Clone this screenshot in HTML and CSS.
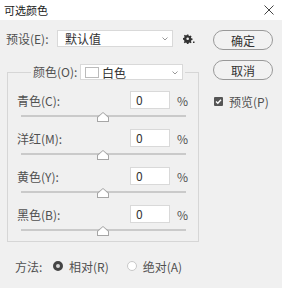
FILE: index.html
```html
<!DOCTYPE html>
<html lang="zh">
<head>
<meta charset="utf-8">
<link rel="stylesheet" href="styles.css">
</head>
<body>
<div class="window">
  <div class="titlebar">
    <span class="title">可选颜色</span>
    <svg class="close" width="10" height="10" viewBox="0 0 10 10"><path d="M0.5 0.5L9.5 9.5M9.5 0.5L0.5 9.5" stroke="#444" stroke-width="1" fill="none"/></svg>
  </div>
  <div class="main">
    <div class="left">
      <div class="preset">
        <span class="preset-label">预设(E):</span>
        <div class="select preset-select">
          <span>默认值</span>
          <svg class="chev" width="6" height="4" viewBox="0 0 6 4"><path d="M0.5 0.5L3 3L5.5 0.5" stroke="#999" fill="none"/></svg>
        </div>
        <svg class="gear" width="12" height="10" viewBox="0 0 12 10">
          <path d="M4 0.5h1.4l0.3 1.2 0.9 0.4 1-0.7 1 1-0.7 1 0.4 0.9 1.2 0.3v1.4l-1.2 0.3-0.4 0.9 0.7 1-1 1-1-0.7-0.9 0.4-0.3 1.2H4l-0.3-1.2-0.9-0.4-1 0.7-1-1 0.7-1-0.4-0.9L0 5.4V4l1.2-0.3 0.4-0.9-0.7-1 1-1 1 0.7 0.9-0.4z" fill="#333"/>
          <circle cx="4.7" cy="4.7" r="1.3" fill="#f0f0f0"/>
          <rect x="10" y="7.5" width="1.5" height="1.5" fill="#333"/>
        </svg>
      </div>
      <fieldset class="group">
        <legend class="legend">
          <span class="legend-label">颜色(O):</span>
          <div class="select color-select">
            <span class="swatch"></span>
            <span>白色</span>
            <svg class="chev" width="6" height="4" viewBox="0 0 6 4"><path d="M0.5 0.5L3 3L5.5 0.5" stroke="#999" fill="none"/></svg>
          </div>
        </legend>
        <div class="slider-block">
          <div class="row"><span class="label">青色(C):</span><div class="input">0</div><span class="pct">%</span></div>
          <div class="track"><span class="thumb"></span></div>
        </div>
        <div class="slider-block">
          <div class="row"><span class="label">洋红(M):</span><div class="input">0</div><span class="pct">%</span></div>
          <div class="track"><span class="thumb"></span></div>
        </div>
        <div class="slider-block">
          <div class="row"><span class="label">黄色(Y):</span><div class="input">0</div><span class="pct">%</span></div>
          <div class="track"><span class="thumb"></span></div>
        </div>
        <div class="slider-block">
          <div class="row"><span class="label">黑色(B):</span><div class="input">0</div><span class="pct">%</span></div>
          <div class="track"><span class="thumb"></span></div>
        </div>
      </fieldset>
      <div class="method">
        <span class="method-label">方法:</span>
        <span class="radio checked"></span>
        <span class="radio-text">相对(R)</span>
        <span class="radio"></span>
        <span class="radio-text">绝对(A)</span>
      </div>
    </div>
    <div class="right">
      <div class="btn">确定</div>
      <div class="btn">取消</div>
      <div class="preview">
        <span class="checkbox"><svg width="9" height="9" viewBox="0 0 9 9"><path d="M2 4.6L3.8 6.3L7 2.8" stroke="#fff" stroke-width="1.4" fill="none"/></svg></span>
        <span>预览(P)</span>
      </div>
    </div>
  </div>
</div>
</body>
</html>
```
FILE: styles.css
```css
* { box-sizing: border-box; }
html, body { margin: 0; padding: 0; }
body {
  width: 282px;
  height: 288px;
  background: #f0f0f0;
  font-family: "Noto Sans CJK SC", "Noto Sans", sans-serif;
  font-size: 12px;
  color: #505050;
  overflow: hidden;
}
.window { width: 282px; height: 288px; }
.titlebar {
  height: 20px;
  background: #fff;
  display: flex;
  align-items: center;
  justify-content: space-between;
  padding: 0 8px 0 4px;
}
.title { font-size: 11px; color: #1a1a1a; line-height: 20px; }
.close { display: block; }
.main { display: flex; }
.left { width: 200px; }
.preset {
  margin-top: 10px;
  height: 17px;
  display: flex;
  align-items: center;
  padding-left: 6px;
}
.preset-label { width: 51px; line-height: 17px; }
.select {
  background: #fff;
  border: 1px solid #d9d9d9;
  display: flex;
  align-items: center;
  position: relative;
  color: #333;
}
.preset-select { width: 116px; height: 17px; padding-left: 7px; }
.chev { position: absolute; right: 4px; top: 6px; }
.gear { margin-left: 10px; display: block; }
.group {
  margin: 17px 0 0 7px;
  width: 192px;
  padding: 11px 0 10px 0;
  border: 1px solid #d6d6d6;
  min-width: 0;
}
.legend {
  margin-left: 23px;
  padding: 0 2px;
  display: flex;
  align-items: center;
  height: 16px;
}
.legend-label { width: 47px; line-height: 16px; }
.color-select { width: 103px; height: 16px; padding-left: 4px; }
.swatch {
  width: 14px;
  height: 11px;
  border: 1px solid #bbb;
  background: #fff;
  margin-right: 3px;
}
.slider-block { margin-bottom: 12px; }
.slider-block:last-child { margin-bottom: 0; }
.row {
  display: flex;
  align-items: center;
  height: 18px;
  padding-left: 9px;
}
.label { width: 113px; }
.input {
  width: 40px;
  height: 18px;
  background: #fff;
  border: 1px solid #d9d9d9;
  padding-left: 5px;
  line-height: 16px;
  color: #333;
}
.pct { margin-left: 7px; }
.track {
  position: relative;
  margin: 6px 0 0 13px;
  width: 165px;
  height: 2px;
  background: #cacaca;
}
.thumb {
  position: absolute;
  left: 76px;
  top: -3px;
  width: 12px;
  height: 10px;
  background: #a6a6a6;
  clip-path: polygon(50% 0, 100% 50%, 100% 100%, 0 100%, 0 50%);
}
.thumb::after {
  content: "";
  position: absolute;
  left: 1px;
  top: 1px;
  width: 10px;
  height: 8px;
  background: #fff;
  clip-path: polygon(50% 0, 100% 55%, 100% 100%, 0 100%, 0 55%);
}
.method {
  margin-top: 16px;
  height: 16px;
  display: flex;
  align-items: center;
  padding-left: 15px;
}
.method-label { width: 38px; }
.radio {
  width: 10px;
  height: 10px;
  border-radius: 50%;
  background: #fff;
  border: 1px solid #c8c8c8;
  margin-right: 6px;
  margin-left: 18px;
}
.radio.checked {
  margin-left: 0;
  background: #d8d8d8;
  border: 3px solid #444;
}
.right { margin-left: 13px; }
.btn {
  width: 60px;
  height: 20px;
  border: 1px solid #999;
  border-radius: 10px;
  background: #f2f2f2;
  display: flex;
  align-items: center;
  justify-content: center;
  color: #333;
  margin-top: 10px;
}
.preview {
  margin-top: 13px;
  height: 16px;
  display: flex;
  align-items: center;
}
.checkbox {
  width: 9px;
  height: 9px;
  background: #555;
  border-radius: 1px;
  margin: 0 6px 0 1px;
  display: flex;
}
```
